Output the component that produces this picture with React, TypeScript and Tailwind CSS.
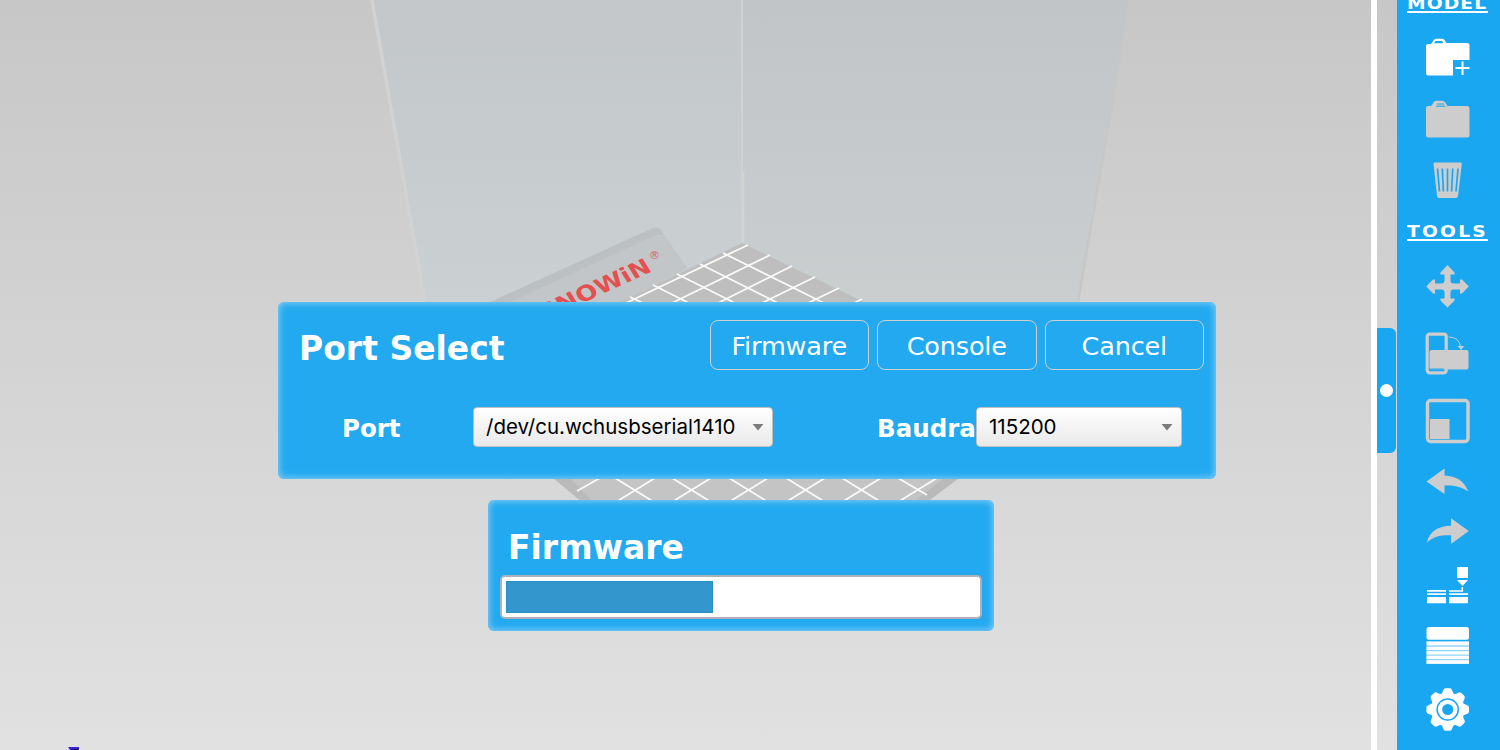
import type { ReactNode } from "react";

const GRAY = "#cdcdcd";

function Scene() {
  return (
    <svg className="absolute inset-0 h-[750px] w-[1371px]" viewBox="0 0 1371 750" aria-hidden="true">
      <defs>
        <linearGradient id="wallL" x1="0" y1="0" x2="0" y2="1">
          <stop offset="0" stopColor="#c3c7ca" />
          <stop offset="1" stopColor="#cbd0d3" />
        </linearGradient>
        <linearGradient id="wallR" x1="0" y1="0" x2="0" y2="1">
          <stop offset="0" stopColor="#c2c5c8" />
          <stop offset="1" stopColor="#cacecf" />
        </linearGradient>
      </defs>
      <path d="M372 0H742V310H427Z" fill="url(#wallL)" />
      <path d="M742 0H1129L1077 310H742Z" fill="url(#wallR)" />
      <path d="M372 0L425 302" stroke="#d2d2d2" strokeWidth="3.4" />
      <path d="M1130 0L1078 302" stroke="#c7c7c7" strokeWidth="2.5" />
      <path d="M742 0V172" stroke="#d1d1cf" strokeWidth="2" />
      <path d="M742.8 172V244" stroke="#d3d3d2" strokeWidth="3" />

      <path d="M488 303L651 229Q657 226 661 230L687 268L620 303Z" fill="#c2c6c8" />
      <path d="M488 303L651 229Q657 226 661 230L664 234L515 303Z" fill="#bcc0c2" />
      <path d="M508 303L658 234L664 235L687 268L620 303Z" fill="#c2c6c8" />
      <g transform="matrix(0.91 -0.415 0.53 0.85 653 271)">
        <text
          textAnchor="end"
          fontFamily="'DejaVu Sans', sans-serif"
          fontWeight="bold"
          fontSize="22"
          textLength="119"
          lengthAdjust="spacingAndGlyphs"
          fill="#e2514f"
        >
          SNOWiN
        </text>
      </g>
      <text x="649" y="259" fontFamily="'DejaVu Sans', sans-serif" fontSize="11" fill="#d9605f">®</text>

      <path d="M742 243L612 306H872Z" fill="#bebebe" />
      <g stroke="#fafafa" strokeWidth="1.8" fill="none">
        <path d="M748 245L626 303M770 255L672 303M792 266L718 303M815 277L762 303M839 288L808 303M862 299L854 303" />
        <path d="M723 253L824 303M700 264L778 303M677 274L735 303M653 285L689 303M630 297L643 303" />
      </g>

      <path d="M553 478H959L926 503H583Z" fill="#bababa" />
      <path d="M570 478H944L912 503H594Z" fill="#c4c4c4" />
      <g stroke="#fafafa" strokeWidth="1.8" fill="none">
        <path d="M577 491L600 478M616 502L655 478M672 502L711 478M729 502L768 478M786 502L825 478M842 502L881 478M898 502L937 478" />
        <path d="M615 478L654 502M672 478L711 502M729 478L768 502M786 478L825 502M842 478L881 502M898 478L927 495" />
      </g>

      <path d="M68 747H79V750H70Z" fill="#3a22d8" />
      <path d="M71 749H79V750H71Z" fill="#1b1560" />
    </svg>
  );
}

function Glyph({ className, h, children }: { className: string; h: number; children: ReactNode }) {
  return (
    <svg className={`ml-7 block shrink-0 ${className}`} width="46" height={h} viewBox={`0 0 46 ${h}`} fill="none">
      {children}
    </svg>
  );
}

function Heading({ children, className }: { children: ReactNode; className: string }) {
  return (
    <div className={`ml-[10px] h-[18px] w-[81px] shrink-0 border-b-2 border-white ${className}`}>
      <div className="origin-left scale-x-[1.13] whitespace-nowrap font-['DejaVu_Sans'] text-[16.5px] leading-[17px] font-bold text-white">
        {children}
      </div>
    </div>
  );
}

function Sidebar() {
  return (
    <aside className="flex h-full w-[103px] shrink-0 flex-col overflow-hidden bg-[#1aa7f2]">
      <Heading className="-mt-[5px] tracking-[1px]">MODEL</Heading>

      <Glyph className="mt-[25px]" h={38}>
        <path d="M3 6H6L9 1.8Q10 .8 11.5 .8H17Q18.5 .8 19.5 2L21.5 5H42Q44.5 5 44.5 7.5V22H28V37.5H3.500Q1 37.500 1 35V8Q1 6 3 6Z" fill="#fff" />
        <path d="M9 5.200L10.500 3H17L18.500 5.200Z" fill="#1aa7f2" />
        <path d="M30.500 30H44.500M37.500 23.500V37" stroke="#fff" strokeWidth="2" />
      </Glyph>
      <Glyph className="mt-6" h={38}>
        <path d="M3 6H6L9 1.800Q10 .8 11.500 .8H17Q18.500 .8 20 2.200L22.500 6H42Q44.500 6 44.500 8.500V35Q44.500 37.500 42 37.500H3.500Q1 37.500 1 35V8Q1 6 3 6Z" fill={GRAY} />
        <path d="M12 4H19M11 6.200H20.500" stroke="#1aa7f2" strokeWidth="1" />
      </Glyph>
      <Glyph className="mt-6" h={37}>
        <path d="M9.500 .5H35.500Q37 .5 36.800 2L33 34Q32.700 36 31 36H14Q12.300 36 12 34L8.500 2Q8.300 .5 9.500 .5Z" fill={GRAY} />
        <path d="M12.500 6.500L14.500 29.500M17.300 6.500L18.400 29.500M22.500 6.500V29.500M27.700 6.500L26.600 29.500M33 6.500L31 29.500" stroke="#1aa7f2" strokeWidth="1.700" />
      </Glyph>

      <Heading className="mt-6 tracking-[2px]">TOOLS</Heading>

      <Glyph className="mt-6" h={43}>
        <path
          d="M22.500 0L29.500 7.500V9.500H25.500V15.500Q25.500 18.500 28.500 18.500H35V14.500H37L43.800 21.500L37 28.500H35V24.500H28.500Q25.500 24.500 25.500 27.500V33.500H29.500V35.500L22.500 42.500L15.500 35.500V33.500H19.500V27.500Q19.500 24.500 16.500 24.500H10V28.500H8L1.200 21.500L8 14.500H10V18.500H16.500Q19.500 18.500 19.500 15.500V9.500H15.500V7.500Z"
          fill={GRAY}
        />
      </Glyph>
      <Glyph className="mt-6" h={43}>
        <rect x="2.200" y="2.200" width="19" height="38.600" rx="2.500" stroke={GRAY} strokeWidth="3.200" />
        <rect x="4.500" y="18" width="39" height="19.500" rx="2" fill={GRAY} />
        <path d="M5.500 37H18.500" stroke="#1aa7f2" strokeWidth="1" />
        <path d="M23.500 5Q34 5 35.500 14.500" stroke={GRAY} strokeWidth="1" />
        <path d="M32.500 14H39L36.200 18Z" fill={GRAY} />
      </Glyph>
      <Glyph className="mt-[23px]" h={46}>
        <rect x="2.500" y="2.500" width="40.500" height="41" rx="3" stroke={GRAY} strokeWidth="3.400" />
        <rect x="5" y="21" width="19.500" height="20" fill={GRAY} />
      </Glyph>
      <Glyph className="mt-6" h={27}>
        <path d="M1.500 13.500L19.500 .5V7.500C31 8 39 12.500 43.300 23.500C36 18.500 29 17 19.500 17.500V26Z" fill={GRAY} />
      </Glyph>
      <Glyph className="mt-[23px]" h={27}>
        <path d="M43.800 13L26 .3V7.800C13 8 4.500 13.500 1.800 24.800C8 18.500 15.500 17 26 17.200V26Z" fill={GRAY} />
      </Glyph>
      <Glyph className="mt-[22px]" h={38}>
        <g fill="#fff">
          <path d="M32 0H43V11H32ZM32 13H43L37.500 19Z" />
          <path d="M2 23H21V24.700H2ZM2 26.300H21V28H2ZM2 30H21V36.200H2ZM24 26.300H43V28H24ZM24 30H43V36.200H24Z" />
        </g>
        <path d="M24 24H37.300V20" stroke="#fff" strokeWidth="1.600" />
      </Glyph>
      <Glyph className="mt-[22px]" h={38}>
        <rect x="1.500" y="0" width="42.500" height="12.800" rx="2.500" fill="#fff" />
        <path d="M1.500 14H44V37H1.500Z" fill="#8fd4fa" />
        <path d="M1.500 16.500H44M1.500 21.300H44M1.500 25.800H44M1.500 30.400H44M1.500 35H44" stroke="#fff" strokeWidth="3.300" />
      </Glyph>
      <Glyph className="mt-[23px]" h={44}>
        <g transform="translate(22.700 21.500)">
          <g fill="#fff">
            <circle r="17" />
            {[0, 45, 90, 135, 180, 225, 270, 315].map((a) => (
              <path key={a} transform={`rotate(${a})`} d="M-6.500 -14L-4.500 -19Q-4 -21.300 -2 -21.300H2Q4 -21.300 4.500 -19L6.500 -14Z" />
            ))}
          </g>
          <circle r="10.600" stroke="#1aa7f2" strokeWidth="1.500" />
          <circle r="5.500" fill="#1aa7f2" />
          <circle r="3.400" fill="#1aa7f2" />
        </g>
      </Glyph>
    </aside>
  );
}

function DialogButton({ children }: { children: ReactNode }) {
  return (
    <button className="h-[50px] w-[159.500px] rounded-[8px] border border-[#cfcfcf] pt-[3px] text-[25.500px] leading-none tracking-[-0.150px] text-white">
      {children}
    </button>
  );
}

function Select({ value, className }: { value: string; className: string }) {
  return (
    <div
      className={`flex h-10 items-center justify-between rounded-[4px] border border-[#c4bfbf] bg-linear-to-b from-white to-[#e9e9e9] pr-2 pl-3 font-['Inter'] text-[20.500px] text-black ${className}`}
    >
      <span>{value}</span>
      <svg width="12" height="7" viewBox="0 0 12 7">
        <path d="M0.500 0H11.500L6 6.500Z" fill="#7b7b7b" />
      </svg>
    </div>
  );
}

const PANEL = "rounded-[6px] bg-[#22a9ef] text-white shadow-[inset_0_0_7px_1px_#8bcff6]";

export default function App() {
  return (
    <div className="flex h-[750px] w-[1500px] overflow-hidden bg-linear-to-b from-[#c7c7c7] to-[#e1e1e1] font-['DejaVu_Sans',sans-serif]">
      <main className="relative w-[1371px] shrink-0">
        <Scene />
        <div className="relative flex flex-col pt-[302px] pl-[278px]">
          <section className={`h-[177px] w-[938px] pt-[18px] ${PANEL}`}>
            <div className="flex items-start justify-between pr-[12px] pl-[21px]">
              <h1 className="pt-[12px] text-[33px] leading-[33px] font-bold">Port Select</h1>
              <div className="flex gap-2">
                <DialogButton>Firmware</DialogButton>
                <DialogButton>Console</DialogButton>
                <DialogButton>Cancel</DialogButton>
              </div>
            </div>
            <div className="mt-[37px] flex items-center pl-[64px] text-[24.500px] font-bold">
              <span className="w-[131px] pt-1">Port</span>
              <Select value="/dev/cu.wchusbserial1410" className="w-[300px] font-normal" />
              <span className="ml-[104px] w-[99px] overflow-hidden pt-1">Baudra</span>
              <Select value="115200" className="w-[206px] font-normal" />
            </div>
          </section>
          <section className={`mt-[21px] ml-[210px] h-[131px] w-[506px] pt-[31px] pl-[12px] ${PANEL}`}>
            <h2 className="pl-[8px] text-[33px] leading-[33px] font-bold">Firmware</h2>
            <div className="mt-[11px] h-[44px] w-[482px] rounded-[5px] border-2 border-[#aeb2b8] bg-white p-1">
              <div className="h-8 w-[207px] border border-[#2590c8] bg-[#3397cd]" />
            </div>
          </section>
        </div>
      </main>
      <div className="w-[6px] shrink-0 bg-white" />
      <div className="w-5 shrink-0 pt-[328px]">
        <div className="flex h-[125px] w-[18.500px] items-center justify-center rounded-r-[6px] bg-[#1aa7f2]">
          <div className="h-[13px] w-[13px] rounded-full bg-white" />
        </div>
      </div>
      <Sidebar />
    </div>
  );
}
